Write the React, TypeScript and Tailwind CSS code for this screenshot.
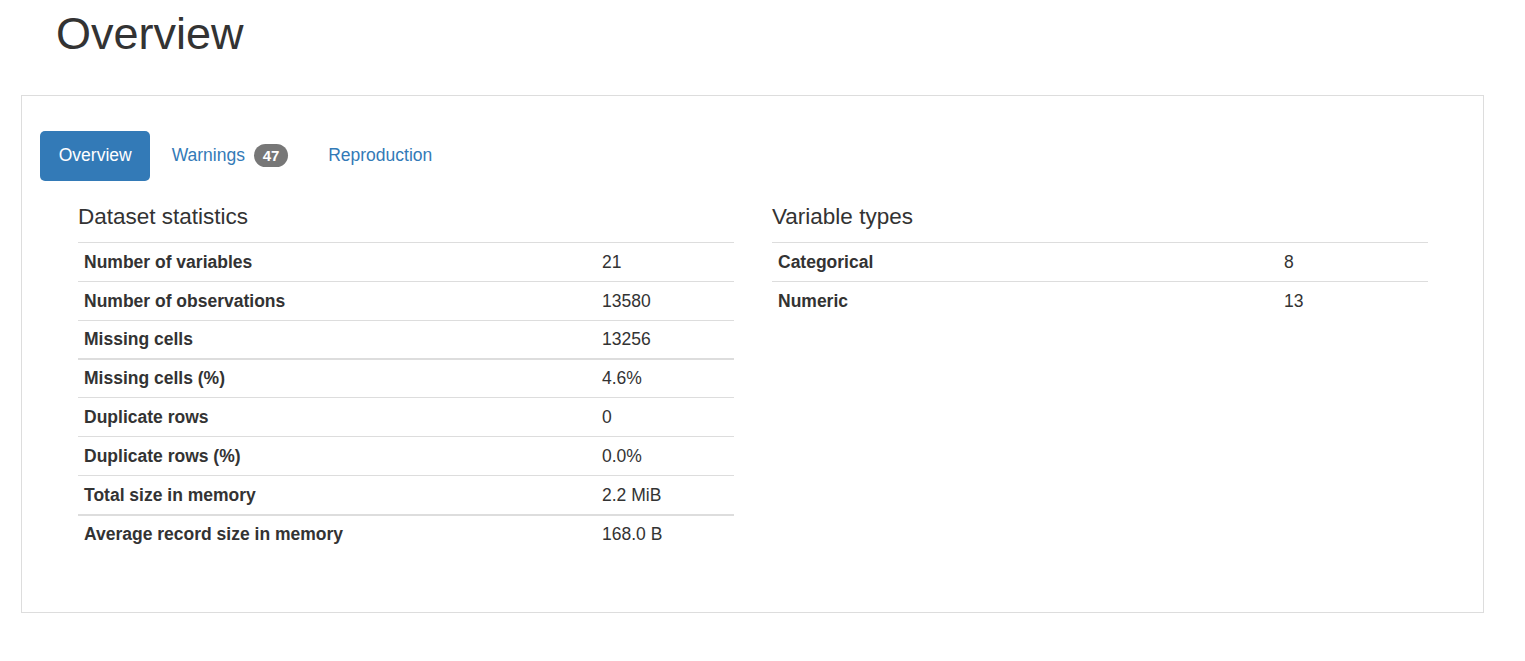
import React from 'react';

const datasetStats = [
    { label: 'Number of variables', value: '21' },
    { label: 'Number of observations', value: '13580' },
    { label: 'Missing cells', value: '13256' },
    { label: 'Missing cells (%)', value: '4.6%' },
    { label: 'Duplicate rows', value: '0' },
    { label: 'Duplicate rows (%)', value: '0.0%' },
    { label: 'Total size in memory', value: '2.2 MiB' },
    { label: 'Average record size in memory', value: '168.0 B' },
];

const variableTypes = [
    { label: 'Categorical', value: '8' },
    { label: 'Numeric', value: '13' },
];

interface StatTableProps {
    title: string;
    rows: { label: string; value: string }[];
    labelWidth: string;
}

// the report is rendered at 125% zoom, so some borders land on 2px
const rowClass = (i: number) => {
    if (i === 2) return 'h-[38px] border-t';
    if (i === 3 || i === 7) return 'h-[39px] border-t-2';
    return 'h-[39px] border-t';
};

const StatTable: React.FC<StatTableProps> = ({ title, rows, labelWidth }) => (
    <div className="w-[656px]">
        <h4 className="mt-[23.5px] mb-[12.5px] text-[22.5px] leading-[24.75px] font-normal">{title}</h4>
        <div className="flex flex-col">
            {rows.map((r, i) => (
                <div key={r.label} className={`${rowClass(i)} flex items-center border-[#ddd] pt-[1px] text-[17.5px] leading-[25px]`}>
                    <div className={`${labelWidth} pl-[6px] font-bold`}>{r.label}</div>
                    <div className="pl-[6px]">{r.value}</div>
                </div>
            ))}
        </div>
    </div>
);

const App: React.FC = () => {
    return (
        <div className="min-h-screen bg-white font-['Liberation_Sans',Arial,sans-serif] text-[#333]">
            <div className="h-[95px] pl-[56px] pt-[9px]">
                <h1 className="text-[45px] leading-[1.1] font-normal">Overview</h1>
            </div>

            <div className="ml-[21px] w-[1463px] border border-[#ddd] px-[18px] pt-[35px] pb-[59px]">
                <ul className="flex gap-[2.5px] text-[17.5px] leading-[25px]">
                    <li className="flex h-[50px] items-center rounded-[5px] bg-[#337ab7] px-[18.75px] pb-[1px] text-white">Overview</li>
                    <li className="flex h-[50px] items-center px-[18.75px] pb-[1px] text-[#337ab7]">
                        Warnings
                        <span className="ml-[9px] rounded-[12px] bg-[#777] px-[8.75px] py-[3.75px] text-[15px] font-bold leading-none text-white">47</span>
                    </li>
                    <li className="flex h-[50px] items-center px-[18.75px] pb-[1px] text-[#337ab7]">Reproduction</li>
                </ul>

                <div className="flex gap-[38px] pl-[38px]">
                    <StatTable title="Dataset statistics" rows={datasetStats} labelWidth="w-[518px]" />
                    <StatTable title="Variable types" rows={variableTypes} labelWidth="w-[506px]" />
                </div>
            </div>
        </div>
    );
};

export default App;
